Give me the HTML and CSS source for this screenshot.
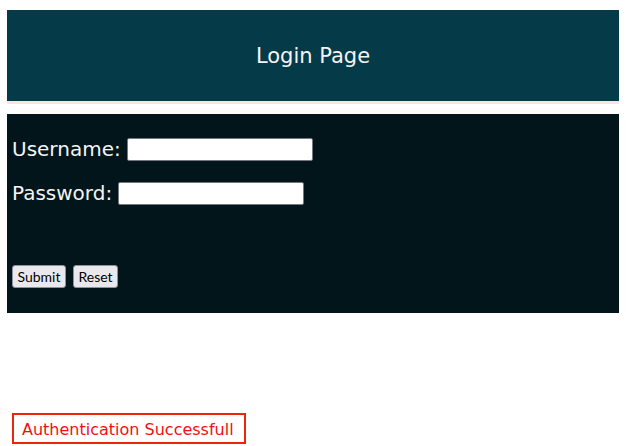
FILE: index.html
```html
<!DOCTYPE html>
<html lang="en">
<head>
    <meta charset="UTF-8">
    <meta name="viewport" content="width=device-width, initial-scale=1.0">
    <title>Login Page</title>
    <link rel="stylesheet" href="styles.css">
</head>
<body>

    <!-- Header -->
    <div class="header">
        <h1>Login Page</h1>
    </div>

    <!-- Login form -->
    <form class="login-form" onsubmit="return false;">
        <div class="form-row">
            <label for="username">Username:</label>
            <input type="text" id="username" name="username">
        </div>
        <div class="form-row">
            <label for="password">Password:</label>
            <input type="password" id="password" name="password">
        </div>
        <div class="form-buttons">
            <button type="submit">Submit</button>
            <button type="reset">Reset</button>
        </div>
    </form>

    <!-- Status message -->
    <div class="status">
        <span class="status-msg">Authentication Successfull</span>
    </div>

</body>
</html>
```

FILE: styles.css
```css
/* Reset */
* {
    margin: 0;
    padding: 0;
    box-sizing: border-box;
}

body {
    font-family: "DejaVu Sans", sans-serif;
    width: 612px;
    margin: 10px 0 0 7px;
}

/* Header */
.header {
    background-color: #053a48;
    height: 94px;
    border-bottom: 3px solid #fde2e2;
    display: flex;
    align-items: center;
    justify-content: center;
}

.header h1 {
    color: #f4f4f4;
    font-size: 21px;
    font-weight: normal;
}

/* Form */
.login-form {
    background-color: #02151b;
    margin-top: 10px;
    height: 199px;
    padding: 23px 5px 0 5px;
    color: #f4f4f4;
}

.form-row {
    display: flex;
    align-items: center;
    gap: 6px;
    font-size: 20px;
    margin-bottom: 20px;
}

.form-row input {
    width: 186px;
    height: 23px;
    border: 1px solid #767680;
    border-radius: 2px;
    background: #fff;
}

.form-buttons {
    display: flex;
    gap: 7px;
    margin-top: 60px;
}

.form-buttons button {
    font-family: Lato, sans-serif;
    font-size: 14px;
    height: 23px;
    padding: 0 4.5px;
    background-color: #e9e9ed;
    border: 1px solid #8f8f9d;
    border-radius: 3px;
    color: #000;
}

/* Status message */
.status {
    margin-top: 100px;
    padding-left: 5px;
}

.status-msg {
    display: inline-block;
    border: 2px solid #f0240a;
    color: #f01010;
    font-size: 16px;
    padding: 5px 10px 3px 8px;
}
```
